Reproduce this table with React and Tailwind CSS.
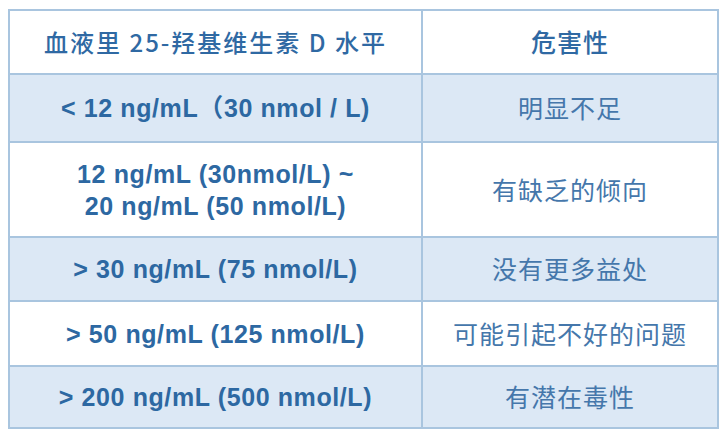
import React from "react";

const rows = [
  { level: "< 12 ng/mL（30 nmol / L)", risk: "明显不足", h: "h-[68px]", shade: true },
  { level: ["12 ng/mL (30nmol/L) ~", "20 ng/mL (50 nmol/L)"], risk: "有缺乏的倾向", h: "h-[95px]", shade: false },
  { level: "> 30 ng/mL (75 nmol/L)", risk: "没有更多益处", h: "h-[64px]", shade: true },
  { level: "> 50 ng/mL (125 nmol/L)", risk: "可能引起不好的问题", h: "h-[65px]", shade: false },
  { level: "> 200 ng/mL (500 nmol/L)", risk: "有潜在毒性", h: "h-[62px]", shade: true },
];

const App = () => {
  return (
    <div className="w-[726px] h-[448px] bg-white pt-[9px] pl-[8px] font-['Liberation_Sans','Noto_Sans_CJK_SC',sans-serif]">
      <table className="w-[711px] border-collapse border-2 border-[#a9c5df] table-fixed">
        <colgroup>
          <col className="w-[413px]" />
          <col />
        </colgroup>
        <thead>
          {/* header row */}
          <tr className="h-[64px] bg-white">
            <th className="border-2 border-[#a9c5df] text-center text-[24px] font-medium tracking-[2px] text-[#2f69a3] font-['Noto_Sans_CJK_SC',sans-serif]">
              血液里 25-羟基维生素 D 水平
            </th>
            <th className="border-2 border-[#a9c5df] text-center text-[25px] font-medium tracking-[1px] text-[#2f69a3] font-['Noto_Sans_CJK_SC',sans-serif]">
              危害性
            </th>
          </tr>
        </thead>
        <tbody>
          {rows.map((r, i) => (
            <tr key={i} className={`${r.h} ${r.shade ? "bg-[#dce8f5]" : "bg-white"}`}>
              <td className="border-2 border-[#a9c5df] text-center text-[25px] leading-[32px] font-bold tracking-[0.6px] text-[#2d68a2]">
                {Array.isArray(r.level) ? (
                  r.level.map((l) => <div key={l}>{l}</div>)
                ) : (
                  r.level
                )}
              </td>
              <td className="border-2 border-[#a9c5df] text-center text-[25px] tracking-[1px] text-[#4577ab] font-['Noto_Sans_CJK_SC',sans-serif]">
                {r.risk}
              </td>
            </tr>
          ))}
        </tbody>
      </table>
    </div>
  );
};

export default App;
